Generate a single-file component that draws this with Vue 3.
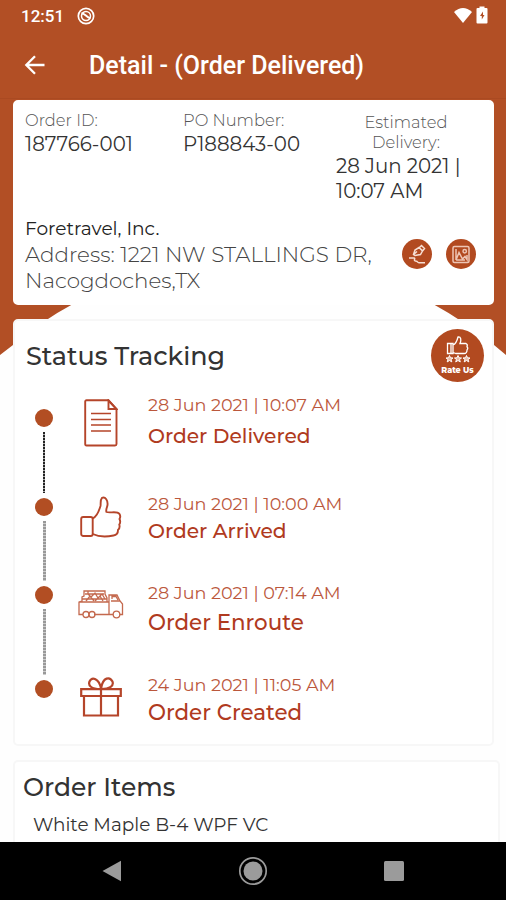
<template>
  <div class="screen">
    <svg class="backdrop" viewBox="0 0 506 360" preserveAspectRatio="none">
      <path d="M0 0H506V355L494 345Q464 321 433 304Q253 210 73 304Q43 320 13 345L0 355Z" fill="#b24f25" />
    </svg>

    <header class="status-bar">
      <span class="status-bar__time">12:51</span>
      <svg class="status-bar__dnd" viewBox="0 0 18 18">
        <circle cx="9" cy="9" r="7.7" fill="none" stroke="#fff" stroke-width="1.7" />
        <circle cx="9" cy="9" r="4.5" fill="none" stroke="#fff" stroke-width="1.5" />
        <path d="M4.500 6.500C7 5.500 8 9 13.500 11.500" fill="none" stroke="#fff" stroke-width="2" />
      </svg>
      <svg class="status-bar__wifi" viewBox="0 0 20 17">
        <path d="M1 5Q10-3 19 5L10 16Z" fill="#fff" />
      </svg>
      <svg class="status-bar__battery" viewBox="0 0 12 18">
        <path d="M3.500 2V.5H8.500V2H10.500Q11.500 2 11.500 3V16.500Q11.500 17.500 10.500 17.500H1.500Q.5 17.500 .5 16.500V3Q.5 2 1.500 2Z" fill="#fff" />
        <path d="M7 5.500L4 10H5.800V13.500L8.500 9H7Z" fill="#b24f25" />
      </svg>
    </header>

    <nav class="app-bar">
      <svg class="app-bar__back" viewBox="0 0 22 20">
        <path d="M20.500 10H2.500M11 1.300L2.300 10L11 18.700" fill="none" stroke="#fff" stroke-width="2.300" />
      </svg>
      <h1 class="app-bar__title">Detail - (Order Delivered)</h1>
    </nav>

    <main class="content">
      <section class="card summary">
        <div class="summary__top">
          <div class="field field--id">
            <span class="field__label">Order ID:</span>
            <span class="field__value">187766-001</span>
          </div>
          <div class="field field--po">
            <span class="field__label">PO Number:</span>
            <span class="field__value">P188843-00</span>
          </div>
          <div class="field field--eta">
            <span class="field__label">Estimated<br>Delivery:</span>
            <span class="field__value">28 Jun 2021 |<br>10:07 AM</span>
          </div>
        </div>
        <div class="summary__bottom">
          <div class="customer">
            <p class="customer__name">Foretravel, Inc.</p>
            <p class="customer__address">Address: 1221 NW STALLINGS DR,<br>Nacogdoches,TX</p>
          </div>
          <button class="round" aria-label="Signature">
            <svg viewBox="0 0 30 30" fill="none" stroke="#f7dfd4" stroke-width="1.500">
              <path d="M11.500 15.500L13 11L17 8.500L20.500 12L18.500 15.500L13 16.500ZM17.500 8.500L19.500 6.500L22.500 9.500L20.500 12M11 16L15 12.500" />
              <path d="M7 19H12C14 19 11 21.500 13.500 22C16 22 15 23.500 17 23.700H23" />
            </svg>
          </button>
          <button class="round" aria-label="Photos">
            <svg viewBox="0 0 30 30" fill="none" stroke="#eec5b4" stroke-width="1.500">
              <rect x="7" y="7.500" width="16" height="16" rx="1.500" />
              <path d="M10 21V10M10 21L13 13.500L16.500 20L19 17.500L21 20.500V16M10 21H19" />
              <circle cx="18.700" cy="12.200" r="1.700" />
            </svg>
          </button>
        </div>
      </section>

      <section class="card tracking">
        <div class="tracking__head">
          <h2 class="heading heading--tracking">Status Tracking</h2>
          <button class="rate">
            <svg class="rate__icon" viewBox="0 0 28 29" fill="none" stroke="#fff" stroke-width="1.300">
              <path d="M3.500 8.500H9V18.500H3.500ZM7 8.500V18.500M9 10C12 9 13 6 14 2C17 1.500 17.500 5 16 8.500H22Q24 9.500 23 11.500Q24.500 13.500 23 15Q23 18.500 20 18.500H12L9 17.500" />
              <path v-for="x in [5.500, 14, 22.500]" :key="x" :d="`M${x} 20.500l1 2.300 2.500.2-2 1.500.8 2.400-2.300-1.400-2.300 1.400.8-2.400-2-1.500 2.500-.2z`" fill="#e9b9a4" stroke-width="1" />
            </svg>
            <span class="rate__label">Rate Us</span>
          </button>
        </div>

        <div class="timeline">
          <div class="rail">
            <template v-for="step in steps" :key="step.title">
              <span class="rail__dot" />
              <span :class="['rail__line', `rail__line--${step.icon}`]" />
            </template>
          </div>
          <ol class="steps">
            <li v-for="step in steps" :key="step.title" :class="['step', `step--${step.icon}`]">
              <div class="step__icon">
                <svg v-if="step.icon === 'document'" width="34" height="48" viewBox="0 0 34 48">
                  <path d="M1.200 2.500Q1.200 1.300 2.500 1.300H24.500L32.500 10V45Q32.500 46.500 31 46.500H2.500Q1.200 46.500 1.200 45Z" />
                  <path d="M24.500 1.500V10H32.500Z" />
                  <path d="M7 14.500H27M7 20.500H27M7 26H27M7 32H27" stroke-width="1.700" />
                </svg>
                <svg v-else-if="step.icon === 'thumb'" width="42" height="42" viewBox="0 0 42 42">
                  <rect x="1.200" y="21" width="11.500" height="19" rx="2" />
                  <path d="M12.700 22.500C18 20 19 14 20.500 10C21 7 20 4 22 1.800C25.500.5 28 4.500 27.500 9C27 12 25.500 14 26.500 16C30 17.500 37 14.500 39.500 18Q41 20.500 39.500 23Q41 26 39.300 28.500Q40.300 32 38 34Q38 39 33.500 39.500C26 41 18 40.500 12.700 38" />
                </svg>
                <svg v-else-if="step.icon === 'truck'" class="truck" width="46" height="30" viewBox="0 0 46 30">
                  <path d="M1 13H31V25.500H16M5 25.500H1V13L4 12V8L6 7V2H27V5L29 9V13M31 13V6H39L42 12L44.500 15V25.500H42M31 25.500H35M33 12H42M34 10V7.500H38L40 11" />
                  <path d="M4 10H29M7 5H26M10 2V5L13 8L17 4L20 9L24 5L27 10M8 12L12 7L16 12M17 12L22 7L25 12" />
                  <circle cx="8" cy="25.500" r="3" />
                  <circle cx="14" cy="25.500" r="3" />
                  <circle cx="38.500" cy="25.500" r="3.300" />
                </svg>
                <svg v-else width="42" height="40" viewBox="0 0 42 40" class="gift">
                  <path d="M1.200 12.200H40.800V19H1.200ZM4 19V38.500H38V19M21 12V38.500" />
                  <path d="M20.500 12C11 12 8 8.500 9.500 4.500C12-.5 19 1 21 11.500C23-.5 30-.5 32.500 4.500C34 9 30 12 21 12" />
                </svg>
              </div>
              <div class="step__text">
                <span class="step__date">{{ step.date }}</span>
                <span class="step__title">{{ step.title }}</span>
              </div>
            </li>
          </ol>
        </div>
      </section>

      <section class="card items">
        <h2 class="heading heading--items">Order Items</h2>
        <p class="items__name">White Maple B-4 WPF VC</p>
      </section>
    </main>

    <footer class="nav-bar">
      <svg width="20" height="22" viewBox="0 0 20 22"><path d="M.5 11L19 .8V21.200Z" fill="#9b9b9b" /></svg>
      <svg width="30" height="30" viewBox="0 0 30 30">
        <circle cx="15" cy="15" r="13.200" fill="none" stroke="#9b9b9b" stroke-width="1.700" />
        <circle cx="15" cy="15" r="9.500" fill="#9b9b9b" />
      </svg>
      <svg width="20" height="20" viewBox="0 0 20 20"><rect width="20" height="20" rx="1.500" fill="#9b9b9b" /></svg>
    </footer>
  </div>
</template>

<script setup>
const steps = [
  { icon: 'document', date: '28 Jun 2021 | 10:07 AM', title: 'Order Delivered' },
  { icon: 'thumb', date: '28 Jun 2021 | 10:00 AM', title: 'Order Arrived' },
  { icon: 'truck', date: '28 Jun 2021 | 07:14 AM', title: 'Order Enroute' },
  { icon: 'gift', date: '24 Jun 2021 | 11:05 AM', title: 'Order Created' }
]
</script>

<style>
body {
  margin: 0;
}
</style>

<style scoped>
.screen {
  position: relative;
  display: flex;
  flex-direction: column;
  width: 506px;
  height: 900px;
  overflow: hidden;
  background: #fefefe;
  font-family: Montserrat, Inter, sans-serif;
  color: #333;
}

.screen * {
  box-sizing: border-box;
}

h1,
h2,
p,
ol {
  margin: 0;
  padding: 0;
  white-space: nowrap;
}

button {
  padding: 0;
  border: 0;
}

.backdrop {
  position: absolute;
  top: 0;
  left: 0;
  width: 506px;
  height: 360px;
}

.status-bar,
.app-bar,
.content,
.nav-bar {
  position: relative;
  display: flex;
}

.status-bar {
  flex: none;
  align-items: center;
  height: 32px;
  padding: 0 18px 0 21px;
  color: #fff;
}

.status-bar__time {
  width: 56px;
  font: 500 17px/32px Roboto, sans-serif;
}

.status-bar__dnd {
  width: 18px;
  height: 18px;
  margin: -1px auto 0 0;
}

.status-bar__wifi {
  width: 20px;
  height: 17px;
  margin: -2px 3px 0 0;
}

.status-bar__battery {
  width: 12px;
  height: 18px;
  margin-top: -2px;
}

.app-bar {
  flex: none;
  align-items: center;
  height: 67px;
  padding-left: 24px;
  border-bottom: 1px solid #aa4a22;
}

.app-bar__back {
  width: 22px;
  height: 20px;
  margin-right: 43px;
}

.app-bar__title {
  padding-top: 2px;
  color: #fff;
  font: 500 25px/32px Roboto, sans-serif;
}

.content {
  flex: 1;
  min-height: 0;
  flex-direction: column;
  gap: 14px;
  padding: 1px 12px 0 13px;
  overflow: hidden;
}

.card {
  flex: none;
  width: 481px;
  background: #fff;
  border: 2px solid #f7f7f7;
  border-radius: 5px;
}

.summary {
  height: 205px;
  padding: 8px 0 0 10px;
  border-color: #fff;
}

.summary__top {
  display: flex;
  height: 106px;
}

.field {
  display: flex;
  flex-direction: column;
}

.field--id {
  width: 158px;
}

.field--po {
  width: 153px;
}

.field--eta {
  width: 140px;
  padding-top: 2px;
}

.field__label {
  font-size: 16.3px;
  line-height: 20px;
  font-weight: 300;
  color: #555;
}

.field__value {
  padding-top: 2px;
  font-size: 19.8px;
  line-height: 25px;
  white-space: nowrap;
}

.field--eta .field__label {
  text-align: center;
}

.summary__bottom {
  display: flex;
}

.customer {
  width: 377px;
}

.customer__name {
  font-size: 18.6px;
  line-height: 25px;
  color: #222;
}

.customer__address {
  font-size: 21.45px;
  line-height: 26px;
  font-weight: 300;
  color: #444;
}

.round {
  width: 30px;
  height: 30px;
  margin: 23px 14px 0 0;
  border-radius: 50%;
  background: #b24a20;
}

.round svg {
  display: block;
}

.heading {
  color: #333;
  font-weight: 500;
}

.tracking {
  height: 427px;
  padding: 8px 8px 0 11px;
}

.tracking__head {
  display: flex;
  justify-content: space-between;
  height: 66px;
}

.heading--tracking {
  padding-top: 10px;
  font-size: 25.4px;
  line-height: 33px;
}

.rate {
  display: flex;
  flex-direction: column;
  align-items: center;
  width: 53px;
  height: 53px;
  padding-top: 6px;
  border-radius: 50%;
  background: #b24a20;
  color: #fff;
}

.rate__icon {
  width: 28px;
  height: 29px;
}

.rate__label {
  font: 800 8px/13px Montserrat, Inter, sans-serif;
}

.timeline {
  display: flex;
}

.rail {
  display: flex;
  flex-direction: column;
  align-items: center;
  width: 36px;
  padding-top: 14px;
}

.rail__dot {
  width: 18px;
  height: 18px;
  border-radius: 50%;
  background: #b24e23;
}

.rail__line {
  width: 3px;
  height: 61px;
  margin: 5px 0;
  background: repeating-linear-gradient(#999 0 2px, #ccc 2px 3px);
}

.rail__line--document {
  width: 2px;
  background: repeating-linear-gradient(#222 0 2px, #aaa 2px 3px);
}

.rail__line--thumb {
  height: 60px;
}

.rail__line--truck {
  height: 66px;
}

.rail__line--gift {
  display: none;
}

.steps {
  list-style: none;
}

.step {
  display: flex;
}

.step--document {
  height: 99px;
}

.step--thumb {
  height: 89px;
}

.step--truck {
  height: 92px;
}

.step__icon {
  display: flex;
  justify-content: center;
  width: 77px;
  margin-right: 9px;
}

.step__icon svg {
  fill: none;
  stroke: #b5452a;
  stroke-width: 1.9;
  margin-top: 2px;
}

.step__icon .truck {
  margin-top: 6px;
  stroke: #c4694e;
  stroke-width: 1.3;
}

.step__icon .gift {
  stroke-width: 2.2;
}

.step--document .step__icon svg {
  margin-top: 4px;
}

.step__text {
  display: flex;
  flex-direction: column;
}

.step__date {
  font-size: 17.6px;
  line-height: 20px;
  color: #bb573c;
}

.step__title {
  margin-top: 4px;
  font-size: 20.2px;
  line-height: 26px;
  font-weight: 500;
  color: #b03a20;
}

.step--document .step__title {
  margin-top: 8px;
}

.step--truck .step__title,
.step--gift .step__title {
  font-size: 21.4px;
}

.step--truck .step__title {
  margin-top: 6px;
}

.items {
  width: 487px;
  height: 120px;
  padding: 9px 8px;
}

.heading--items {
  font-size: 25px;
  line-height: 32px;
}

.items__name {
  padding: 10px 10px 0;
  font-size: 18.4px;
  line-height: 24px;
}

.nav-bar {
  flex: none;
  align-items: center;
  justify-content: space-between;
  height: 58px;
  padding: 0 102px;
  background: #000;
}
</style>
